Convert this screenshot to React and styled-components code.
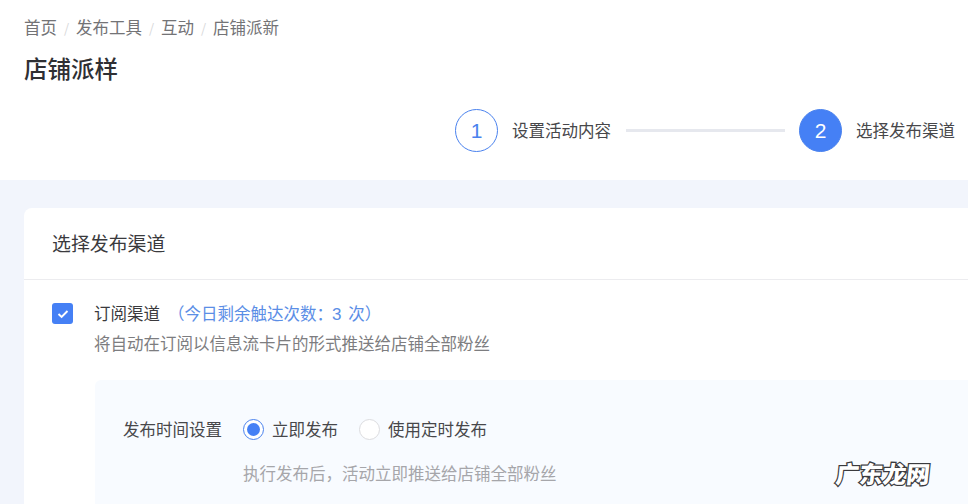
import React from 'react'
import styled, { createGlobalStyle } from 'styled-components'

const Global = createGlobalStyle`
  html, body { margin: 0; padding: 0; background: #f2f5fc; }
  body {
    width: 968px;
    height: 504px;
    overflow: hidden;
    font-family: "Noto Sans CJK SC", "Noto Sans", sans-serif;
    color: #333;
  }
`

const Page = styled.div`
  position: relative;
  width: 968px;
  height: 504px;
  overflow: hidden;
`

const Header = styled.header`
  background: #fff;
  height: 180px;
  padding: 17px 13px 0 24px;
  box-sizing: border-box;
`

const Breadcrumb = styled.nav`
  display: flex;
  align-items: center;
  height: 20px;
  font-size: 16.5px;
  color: #737376;
`

const Slash = styled.span`
  color: #d8d8da;
  font-size: 13px;
  width: 19px;
  text-align: center;
`

const Title = styled.h1`
  margin: 17px 0 0;
  font-size: 23.5px;
  line-height: 28px;
  font-weight: 500;
  color: #2f2f33;
`

const Steps = styled.div`
  display: flex;
  justify-content: flex-end;
  align-items: center;
  margin-top: 27px;
`

const StepCircle = styled.div`
  width: 43px;
  height: 43px;
  box-sizing: border-box;
  border-radius: 50%;
  border: 1px solid #4a82ee;
  background: ${p => (p.$active ? '#4580f5' : '#fff')};
  color: ${p => (p.$active ? '#fff' : '#4a82ee')};
  font-family: "Liberation Sans", sans-serif;
  font-size: 21px;
  display: flex;
  align-items: center;
  justify-content: center;
`

const StepLabel = styled.span`
  margin-left: 14px;
  padding-bottom: 2px;
  font-size: 16.5px;
  color: #47474a;
`

const StepLine = styled.div`
  width: 159px;
  height: 3px;
  margin: 0 14px 0 15px;
  background: #e6e8ee;
`

const Content = styled.main`
  padding: 28px 0 0 24px;
`

const Card = styled.section`
  width: 980px;
  height: 400px;
  background: #fff;
  border-radius: 8px 0 0 0;
`

const CardHeader = styled.div`
  padding: 0 0 2px 28px;
  height: 69px;
  display: flex;
  align-items: center;
  border-bottom: 1px solid #ececef;
  font-size: 18.9px;
  color: #3a3a3d;
`

const CardBody = styled.div`
  padding: 23px 0 0 28px;
`

const ChannelRow = styled.div`
  display: flex;
  gap: 22px;
`

const CheckBox = styled.div`
  width: 21px;
  height: 21px;
  flex: none;
  border-radius: 3px;
  background: #4580f5;
  display: flex;
  align-items: center;
  justify-content: center;
`

const ChannelText = styled.div`
  font-size: 16.5px;
`

const ChannelTitle = styled.div`
  display: flex;
  height: 21px;
  align-items: center;
  margin-top: -1px;
  margin-left: -1px;
  color: #3a3a3d;
`

const Quota = styled.span`
  margin-left: 8px;
  color: #5b8ee6;
`

const QuotaCount = styled.span`
  font-family: "Liberation Sans", sans-serif;
  font-size: 17px;
  margin: 0 3px 0 -1px;
`

const ChannelDesc = styled.div`
  margin-top: 10px;
  margin-left: -1px;
  height: 21px;
  line-height: 21px;
  color: #7d7d80;
`

const OptionsPanel = styled.div`
  margin: 26px 0 0 43px;
  padding: 37px 0 0 28px;
  height: 200px;
  background: #f8fbff;
  border-radius: 6px;
`

const OptionRow = styled.div`
  display: flex;
  align-items: center;
  height: 24px;
  font-size: 16.5px;
  color: #47474a;
`

const OptionLabel = styled.span`
  width: 120px;
`

const Radio = styled.span`
  width: 21px;
  height: 21px;
  box-sizing: border-box;
  border-radius: 50%;
  border: 1px solid ${p => (p.$on ? '#4a82ee' : '#dcdcdf')};
  background: #fff;
  display: flex;
  align-items: center;
  justify-content: center;
  margin-right: 8px;
  margin-top: 1px;
  &::after {
    content: '';
    display: ${p => (p.$on ? 'block' : 'none')};
    width: 13px;
    height: 13px;
    border-radius: 50%;
    background: #4580f5;
  }
`

const RadioText = styled.span`
  margin-right: 21px;
`

const Hint = styled.div`
  margin: 21px 0 0 120px;
  height: 22px;
  line-height: 22px;
  font-size: 16.5px;
  color: #a6a6aa;
`

const Watermark = styled.div`
  position: absolute;
  right: 38px;
  bottom: 17px;
  font-size: 23.5px;
  font-weight: 900;
  line-height: 28px;
  color: #fff;
  -webkit-text-stroke: 2.5px #3a3a3e;
  paint-order: stroke fill;
  transform: skewX(-6deg);
`

const App = () => {
  return (
    <Page>
      <Global />
      <Header>
        <Breadcrumb>
          <span>首页</span>
          <Slash>/</Slash>
          <span>发布工具</span>
          <Slash>/</Slash>
          <span>互动</span>
          <Slash>/</Slash>
          <span>店铺派新</span>
        </Breadcrumb>
        <Title>店铺派样</Title>
        <Steps>
          <StepCircle>1</StepCircle>
          <StepLabel>设置活动内容</StepLabel>
          <StepLine />
          <StepCircle $active>2</StepCircle>
          <StepLabel>选择发布渠道</StepLabel>
        </Steps>
      </Header>
      <Content>
        <Card>
          <CardHeader>选择发布渠道</CardHeader>
          <CardBody>
            <ChannelRow>
              <CheckBox>
                <svg width="12" height="10" viewBox="0 0 12 10" fill="none">
                  <path d="M1.5 5 L4.6 8 L10.5 2" stroke="#fff" strokeWidth="1.9" />
                </svg>
              </CheckBox>
              <ChannelText>
                <ChannelTitle>
                  订阅渠道
                  <Quota>（今日剩余触达次数：<QuotaCount>3</QuotaCount> 次）</Quota>
                </ChannelTitle>
                <ChannelDesc>将自动在订阅以信息流卡片的形式推送给店铺全部粉丝</ChannelDesc>
              </ChannelText>
            </ChannelRow>
            <OptionsPanel>
              <OptionRow>
                <OptionLabel>发布时间设置</OptionLabel>
                <Radio $on />
                <RadioText>立即发布</RadioText>
                <Radio />
                <RadioText>使用定时发布</RadioText>
              </OptionRow>
              <Hint>执行发布后，活动立即推送给店铺全部粉丝</Hint>
            </OptionsPanel>
          </CardBody>
        </Card>
      </Content>
      <Watermark>广东龙网</Watermark>
    </Page>
  )
}

export default App
